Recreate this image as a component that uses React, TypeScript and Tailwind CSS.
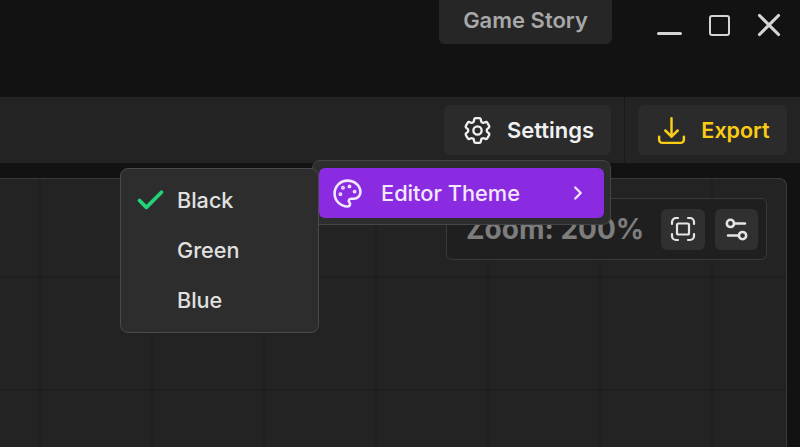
import { Check, ChevronRight, Palette, Settings2, X } from 'lucide-react'
import { HiOutlineArrowDownTray, HiOutlineCog6Tooth } from 'react-icons/hi2'

const themes = ['Black', 'Green', 'Blue']

function FitIcon() {
  return (
    <svg width="26" height="26" viewBox="0 0 26 26" fill="none" stroke="currentColor" strokeWidth="2.2" strokeLinecap="round">
      <path d="M2 8V6a4 4 0 0 1 4-4h2M18 2h2a4 4 0 0 1 4 4v2M24 18v2a4 4 0 0 1-4 4h-2M8 24H6a4 4 0 0 1-4-4v-2" />
      <rect x="7" y="7.5" width="12" height="11" rx="1.5" />
    </svg>
  )
}

function TitleBar() {
  return (
    <div className="flex h-[97px] shrink-0 items-start justify-end bg-[#121212]">
      <div className="flex h-11 w-[173px] items-center justify-center rounded-b-md bg-[#262626] pb-1 text-[22px] font-semibold text-[#a8a8a8]">
        Game Story
      </div>
      <div className="ml-[45px] mr-[12px] mt-[6px] flex items-center text-[#d4d4d4]">
        <span className="mt-[17px] h-[3px] w-[25px] rounded-sm bg-[#d4d4d4]" />
        <span className="ml-[27px] h-[21px] w-[21px] rounded-[3px] border-[2.5px] border-[#d4d4d4]" />
        <X size={38} strokeWidth={2} className="ml-[20px]" />
      </div>
    </div>
  )
}

function ToolBar() {
  return (
    <div className="flex h-[66px] shrink-0 items-center justify-end bg-[#232323] pr-[13px]">
      <button className="flex h-[50px] w-[167px] items-center justify-center gap-[13px] rounded-md bg-[#2b2b2b] text-[22px] font-semibold text-[#f0f0f0]">
        <HiOutlineCog6Tooth size={33} strokeWidth={1.7} />
        Settings
      </button>
      <div className="mx-[13px] h-full w-px bg-[#1a1a1a]" />
      <button className="flex h-[50px] w-[149px] items-center justify-center gap-[13px] rounded-md bg-[#2b2b2b] text-[21.5px] font-semibold text-[#facc15]">
        <HiOutlineArrowDownTray size={33} strokeWidth={1.8} />
        Export
      </button>
    </div>
  )
}

function Canvas() {
  return (
    <div className="min-h-0 flex-1 bg-[#121212] pr-[13px] pt-[15px]">
      <div className="relative flex h-full justify-end rounded-tr-lg border-r border-t border-[#3a3a3a] bg-[#232323] bg-[linear-gradient(to_right,#1f1f1f_2px,transparent_2px),linear-gradient(to_bottom,#1f1f1f_2px,transparent_2px)] bg-[size:112px_113px] bg-[position:39px_97px] pr-[19px] pt-[19px]">
        <div className="flex h-[62px] w-[321px] items-center justify-between rounded-md border border-[#3a3a3a] bg-[#1f1f1f] pl-[19px] pr-[8px]">
          <span className="text-[28px] font-bold text-[#7d7d7d]">Zoom: 200%</span>
          <div className="flex gap-[10px]">
            <button className="flex h-[41px] w-[44px] items-center justify-center rounded-md bg-[#303030] text-[#e5e5e5]">
              <FitIcon />
            </button>
            <button className="flex h-[41px] w-[43px] items-center justify-center rounded-md bg-[#303030] text-[#e5e5e5]">
              <Settings2 size={29} strokeWidth={2.1} />
            </button>
          </div>
        </div>
      </div>
    </div>
  )
}

function Menus() {
  return (
    <>
      <div className="absolute left-[312px] top-[160px] w-[299px] rounded-lg border border-[#454545] bg-[#2d2d2d] px-[6px] pb-[6px] pt-[7px]">
        <div className="flex h-[50px] items-center rounded-md bg-[#8a2be2] pl-[13px] pr-[15px] text-[21.8px] font-medium text-[#f3e8ff]">
          <Palette size={31} strokeWidth={2} />
          <span className="ml-[18px] flex-1">Editor Theme</span>
          <ChevronRight size={22} strokeWidth={2.5} />
        </div>
      </div>
      <div className="absolute left-[120px] top-[168px] flex h-[165px] w-[199px] flex-col justify-center rounded-lg border border-[#4a4a4a] bg-[#2d2d2d]">
        {themes.map((t, i) => (
          <div key={t} className="flex h-[50px] items-center text-[21.6px] font-medium text-[#e0e0e0]">
            <span className="flex w-[56px] items-center pl-[13px]">
              {i === 0 && <Check size={33} strokeWidth={2.7} className="text-[#22d37a]" />}
            </span>
            <span>{t}</span>
          </div>
        ))}
      </div>
    </>
  )
}

export default function App() {
  return (
    <div className="relative flex h-[447px] w-[800px] flex-col overflow-hidden bg-[#121212] font-['Inter',sans-serif]">
      <TitleBar />
      <ToolBar />
      <Canvas />
      <Menus />
    </div>
  )
}
